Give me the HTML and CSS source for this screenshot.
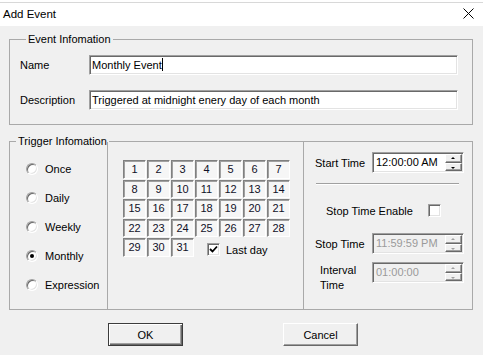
FILE: index.html
```html
<!DOCTYPE html>
<html>
<head>
<title>Add Event</title>
<link rel="stylesheet" href="styles.css">
</head>
<body>

  <div class="titlebar">
    <span class="title">Add Event</span>
    <svg class="close-icon" width="11" height="11" viewBox="0 0 11 11">
      <path d="M0.5 0.5 L10.5 10.5 M10.5 0.5 L0.5 10.5" stroke="#000" stroke-width="1" fill="none"/>
    </svg>
  </div>

  <div class="dialog">
    <fieldset class="group event-group">
      <legend>Event Infomation</legend>
      <div class="field-row">
        <span class="field-label">Name</span>
        <div class="textbox">Monthly Event<span class="caret"></span></div>
      </div>
      <div class="field-row description-row">
        <span class="field-label">Description</span>
        <div class="textbox">Triggered at midnight enery day of each month</div>
      </div>
    </fieldset>

    <fieldset class="group trigger-group">
      <legend>Trigger Infomation</legend>
      <div class="trigger-row">
        <div class="radio-list">
          <div class="radio"><span class="radio-mark"></span>Once</div>
          <div class="radio"><span class="radio-mark"></span>Daily</div>
          <div class="radio"><span class="radio-mark"></span>Weekly</div>
          <div class="radio"><span class="radio-mark checked"></span>Monthly</div>
          <div class="radio"><span class="radio-mark"></span>Expression</div>
        </div>

        <div class="days-panel">
          <div class="day-grid" id="day-grid">
            <div class="last-day">
              <span class="checkbox">
                <svg width="9" height="9" viewBox="0 0 9 9"><path d="M1 4 L3.5 6.5 L8 1.5" stroke="#000" stroke-width="1.8" fill="none"/></svg>
              </span>
              Last day
            </div>
          </div>
        </div>

        <div class="time-panel">
          <div class="time-row">
            <span class="time-label">Start Time</span>
            <div class="spinbox">
              <span class="spin-text">12:00:00 AM</span>
              <div class="spin-buttons">
                <div class="spin-btn up"></div>
                <div class="spin-btn down"></div>
              </div>
            </div>
          </div>
          <div class="separator"></div>
          <div class="enable-row">
            <span class="enable-label">Stop Time Enable</span>
            <span class="checkbox"></span>
          </div>
          <div class="time-row stop-row">
            <span class="time-label">Stop Time</span>
            <div class="spinbox disabled">
              <span class="spin-text">11:59:59 PM</span>
              <div class="spin-buttons">
                <div class="spin-btn up"></div>
                <div class="spin-btn down"></div>
              </div>
            </div>
          </div>
          <div class="time-row interval-row">
            <span class="time-label interval-label">Interval<br>Time</span>
            <div class="spinbox disabled">
              <span class="spin-text">01:00:00</span>
              <div class="spin-buttons">
                <div class="spin-btn up"></div>
                <div class="spin-btn down"></div>
              </div>
            </div>
          </div>
        </div>
      </div>
    </fieldset>

    <div class="buttons">
      <button class="btn btn-default">OK</button>
      <button class="btn">Cancel</button>
    </div>
  </div>

  <script>
    const dayGrid = document.getElementById('day-grid');
    const lastDay = dayGrid.querySelector('.last-day');
    for (let day = 1; day <= 31; day++) {
      const cell = document.createElement('div');
      cell.className = 'day-cell';
      cell.textContent = day;
      dayGrid.insertBefore(cell, lastDay);
    }
  </script>
</body>
</html>
```

FILE: styles.css
```css
body {
  margin: 0;
  width: 483px;
  height: 355px;
  overflow: hidden;
  background-color: #f0f0f0;
  font-family: "Liberation Sans", Arial, sans-serif;
  font-size: 11px;
  color: #000;
}
.titlebar {
  height: 26px;
  background-color: #fff;
  display: flex;
  align-items: center;
  justify-content: space-between;
  padding: 0 9px 0 3px;
  box-shadow: inset 0 2px 0 #fff, inset 0 3px 0 #d8d8d8;
}
.title {
  font-size: 11.5px;
  padding-top: 1px;
}
.close-icon {
  display: block;
  margin-top: 1px;
}
.dialog {
  padding-left: 9px;
}
.group {
  margin: 0;
  width: 464px;
  box-sizing: border-box;
  border: 1px solid #a9a9a9;
  padding: 0;
  min-width: 0;
}
.group legend {
  margin-left: 6px;
  padding: 0 2px;
  line-height: 13px;
}
.event-group {
  margin-top: 7px;
  padding: 9px 14px 14px 10px;
}
.field-row {
  display: flex;
  align-items: center;
  height: 20px;
}
.description-row {
  margin-top: 15px;
}
.field-label {
  width: 69px;
}
.textbox {
  width: 369px;
  height: 20px;
  box-sizing: border-box;
  background-color: #fff;
  border: 1px solid;
  border-color: #a0a0a0 #fff #fff #a0a0a0;
  box-shadow: inset 1px 1px 0 #696969, inset -1px -1px 0 #e3e3e3;
  padding-left: 2px;
  line-height: 18px;
  white-space: nowrap;
}
.caret {
  display: inline-block;
  width: 1px;
  height: 13px;
  background-color: #000;
  vertical-align: -2px;
}
.trigger-group {
  margin-top: 10px;
}
.trigger-row {
  display: flex;
  margin-top: -6px;
  height: 167px;
}
.radio-list {
  width: 97px;
  padding: 12px 0 0 16px;
  box-sizing: border-box;
}
.radio {
  display: flex;
  align-items: center;
  height: 29px;
}
.radio-mark {
  position: relative;
  width: 12px;
  height: 12px;
  box-sizing: border-box;
  border-radius: 50%;
  background-color: #fff;
  border: 1px solid;
  border-color: #a0a0a0 #fff #fff #a0a0a0;
  box-shadow: inset 1px 1px 0 #696969, inset -1px -1px 0 #e3e3e3;
  margin-right: 7px;
}
.radio-mark.checked::after {
  content: "";
  position: absolute;
  left: 3px;
  top: 3px;
  width: 4px;
  height: 4px;
  border-radius: 50%;
  background-color: #000;
}
.days-panel {
  width: 196px;
  box-sizing: border-box;
  border-left: 1px solid #a9a9a9;
  padding: 18px 0 0 15px;
}
.day-grid {
  display: grid;
  grid-template-columns: repeat(7, 23px);
  grid-auto-rows: 18.5px;
  column-gap: 1px;
  row-gap: 1px;
}
.day-cell {
  display: flex;
  align-items: center;
  justify-content: center;
  box-sizing: border-box;
  background-color: #f6f6f6;
  border: 1px solid;
  border-color: #808080 #fff #fff #808080;
  box-shadow: inset 1px 1px 0 #a0a0a0;
  color: #101028;
}
.last-day {
  grid-column: 4 / span 4;
  display: flex;
  align-items: center;
  padding: 5px 0 0 12px;
}
.last-day .checkbox {
  margin-right: 6px;
}
.checkbox {
  display: inline-flex;
  align-items: center;
  justify-content: center;
  width: 13px;
  height: 13px;
  box-sizing: border-box;
  background-color: #fff;
  border: 1px solid;
  border-color: #a0a0a0 #fff #fff #a0a0a0;
  box-shadow: inset 1px 1px 0 #696969, inset -1px -1px 0 #e3e3e3;
}
.checkbox svg {
  display: block;
}
.time-panel {
  flex: 1;
  border-left: 1px solid #a9a9a9;
  padding: 10px 0 0 11px;
}
.time-row {
  display: flex;
  align-items: center;
  height: 21px;
}
.time-label {
  width: 57px;
}
.stop-row {
  margin-top: 12px;
}
.interval-row {
  margin-top: 8px;
  align-items: flex-start;
}
.interval-label {
  width: 52px;
  padding-left: 5px;
  line-height: 15px;
  margin-top: 1px;
}
.spinbox {
  display: flex;
  width: 92px;
  height: 21px;
  box-sizing: border-box;
  background-color: #fff;
  border: 1px solid;
  border-color: #a0a0a0 #fff #fff #a0a0a0;
  box-shadow: inset 1px 1px 0 #696969, inset -1px -1px 0 #e3e3e3;
  padding: 1px;
}
.spin-text {
  flex: 1;
  padding-left: 2px;
  line-height: 16px;
  white-space: nowrap;
}
.spin-buttons {
  width: 17px;
  display: flex;
  flex-direction: column;
}
.spin-btn {
  position: relative;
  flex: 1;
  background-color: #f0f0f0;
  border: 1px solid;
  border-color: #fff #696969 #696969 #fff;
  box-shadow: inset -1px -1px 0 #a0a0a0;
}
.spin-btn::after {
  content: "";
  position: absolute;
  left: 5px;
  width: 0;
  height: 0;
  border-left: 2px solid transparent;
  border-right: 2px solid transparent;
}
.spin-btn.up::after {
  top: 2px;
  border-bottom: 2px solid #000;
}
.spin-btn.down::after {
  top: 3px;
  border-top: 2px solid #000;
}
.separator {
  width: 143px;
  margin: 10px 0 0 1px;
  border-top: 1px solid #a0a0a0;
  border-bottom: 1px solid #fff;
}
.enable-row {
  display: flex;
  align-items: center;
  height: 21px;
  margin-top: 15px;
  padding-left: 11px;
}
.enable-label {
  width: 102px;
}
.spinbox.disabled {
  background-color: #f0f0f0;
  color: #9a9a9a;
}
.spinbox.disabled .spin-btn::after {
  border-top-color: #a0a0a0;
  border-bottom-color: #a0a0a0;
}
.buttons {
  display: flex;
  gap: 100px;
  margin: 13px 0 0 99px;
}
.btn {
  width: 75px;
  height: 23px;
  box-sizing: border-box;
  padding: 0;
  font-family: "Liberation Sans", Arial, sans-serif;
  font-size: 11px;
  color: #000;
  background-color: #f0f0f0;
  border: 1px solid;
  border-color: #fff #696969 #696969 #fff;
  box-shadow: inset -1px -1px 0 #a0a0a0;
}
.btn-default {
  border: 1px solid #3c3c3c;
  box-shadow: inset 1px 1px 0 #fff, inset -1px -1px 0 #696969, inset -2px -2px 0 #a0a0a0;
}
```
